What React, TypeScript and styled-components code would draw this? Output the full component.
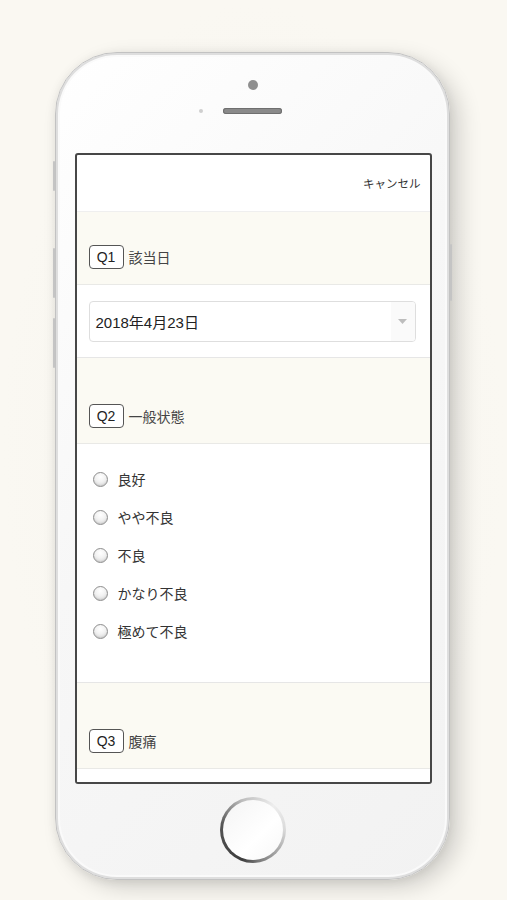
import React from "react";
import styled, { createGlobalStyle } from "styled-components";

const GlobalStyle = createGlobalStyle`
  html, body { margin: 0; padding: 0; }
  body {
    background: #f9f7f1;
    font-family: "Liberation Sans", "Noto Sans CJK JP", sans-serif;
    color: #333;
  }
`;

const Page = styled.div`
  width: 507px;
  height: 900px;
  padding: 52px 0 0 55px;
  box-sizing: border-box;
  overflow: hidden;
  background: radial-gradient(ellipse at 50% 50%, #f6f4ee 0%, #faf8f2 70%);
`;

const Phone = styled.div`
  position: relative;
  width: 395px;
  height: 828px;
  box-sizing: border-box;
  border-radius: 62px;
  background: linear-gradient(135deg, #ffffff 0%, #f7f7f7 45%, #f2f2f2 100%);
  border: 1px solid #c2c2c2;
  box-shadow:
    inset 0 0 0 2px #dedede,
    inset 0 0 0 4px #fafafa,
    10px 8px 22px rgba(0, 0, 0, 0.16),
    0 2px 10px rgba(0, 0, 0, 0.08);
  display: flex;
  flex-direction: column;
  align-items: center;
`;

const SideButton = styled.div<{ $side: "left" | "right"; $top: number; $h: number }>`
  position: absolute;
  ${(p) => (p.$side === "left" ? "left: -3px;" : "right: -3px;")}
  top: ${(p) => p.$top}px;
  width: 2px;
  height: ${(p) => p.$h}px;
  background: #c4c4c4;
  border-radius: 1px;
`;

const TopBezel = styled.div`
  height: 100px;
  width: 100%;
  display: flex;
  flex-direction: column;
  align-items: center;
  padding-top: 27px;
  box-sizing: border-box;
`;

const Camera = styled.div`
  width: 10px;
  height: 10px;
  border-radius: 50%;
  background: #8f8f8f;
`;

const SpeakerRow = styled.div`
  margin-top: 18px;
  width: 100%;
  display: grid;
  grid-template-columns: 1fr auto 1fr;
  align-items: center;
`;

const Sensor = styled.div`
  justify-self: end;
  margin-right: 20px;
  width: 4px;
  height: 4px;
  border-radius: 50%;
  background: #cfcfcf;
`;

const Speaker = styled.div`
  width: 59px;
  height: 6px;
  border-radius: 3px;
  background: #8a8a8a;
  box-shadow: inset 0 0 0 1px #6f6f6f;
`;

const Screen = styled.div`
  width: 357px;
  height: 631px;
  box-sizing: border-box;
  border: 2px solid #474747;
  border-radius: 3px;
  background: #fff;
  overflow: hidden;
  display: flex;
  flex-direction: column;
  margin-left: 1px;
`;

const Header = styled.div`
  height: 56px;
  flex: none;
  display: flex;
  align-items: center;
  justify-content: flex-end;
  padding-right: 9px;
  border-bottom: 1px solid #efefef;
`;

const CancelLink = styled.span`
  font-family: "Noto Sans CJK JP", sans-serif;
  font-size: 11.5px;
  color: #333;
`;

const QuestionHead = styled.div<{ $top: number }>`
  flex: none;
  background: #fbfaf3;
  padding: ${(p) => p.$top}px 12px 15px;
  display: flex;
  align-items: center;
  border-bottom: 1px solid #e9e9e6;
`;

const Badge = styled.span`
  display: inline-flex;
  align-items: center;
  justify-content: center;
  width: 35px;
  height: 24px;
  box-sizing: border-box;
  border: 1px solid #555;
  border-radius: 4px;
  background: #fff;
  font-family: "Liberation Sans", sans-serif;
  font-size: 14px;
  color: #222;
`;

const QuestionTitle = styled.span`
  margin-left: 5px;
  font-family: "Noto Sans CJK JP", sans-serif;
  font-size: 14px;
  color: #444;
`;

const AnswerArea = styled.div<{ $pt: number; $pb: number }>`
  flex: none;
  padding: ${(p) => p.$pt}px 14px ${(p) => p.$pb}px 12px;
  border-bottom: 1px solid #e6e6e6;
`;

const SelectBox = styled.div`
  height: 41px;
  box-sizing: border-box;
  border: 1px solid #dedede;
  border-radius: 4px;
  display: flex;
  align-items: center;
  overflow: hidden;
`;

const SelectValue = styled.span`
  flex: 1;
  padding-left: 6px;
  font-family: "Liberation Sans", "Noto Sans CJK JP", sans-serif;
  font-size: 15px;
  color: #222;
`;

const SelectArrow = styled.div`
  width: 24px;
  align-self: stretch;
  background: #fafafa;
  display: flex;
  align-items: center;
  justify-content: center;
`;

const OptionList = styled.div`
  display: flex;
  flex-direction: column;
`;

const OptionRow = styled.label`
  height: 38px;
  display: flex;
  align-items: center;
  padding-left: 4px;
`;

const Radio = styled.span`
  width: 15px;
  height: 15px;
  box-sizing: border-box;
  border-radius: 50%;
  border: 1px solid #8e8e8e;
  background: radial-gradient(circle at 50% 30%, #ffffff 0%, #f2f2f2 45%, #cfcfcf 100%);
  box-shadow: inset 0 -1px 1px rgba(0, 0, 0, 0.08);
`;

const OptionText = styled.span`
  margin-left: 10px;
  font-family: "Noto Sans CJK JP", sans-serif;
  font-size: 14px;
  color: #333;
`;

const Filler = styled.div`
  flex: 1;
  background: #fff;
`;

const BottomBezel = styled.div`
  flex: 1;
  width: 100%;
  display: flex;
  justify-content: center;
  padding-top: 13px;
  box-sizing: border-box;
`;

const HomeButton = styled.div`
  width: 66px;
  height: 66px;
  border-radius: 50%;
  background: conic-gradient(from 200deg, #3d3d3d 0deg, #555 80deg, #bdbdbd 140deg, #eeeeee 200deg, #d9d9d9 250deg, #7a7a7a 330deg, #3d3d3d 360deg);
  display: flex;
  align-items: center;
  justify-content: center;
`;

const HomeInner = styled.div`
  width: 60px;
  height: 60px;
  border-radius: 50%;
  background: linear-gradient(135deg, #f4f4f4, #ffffff 60%, #f7f7f7);
`;

const options = ["良好", "やや不良", "不良", "かなり不良", "極めて不良"];

export default function App() {
  return (
    <>
      <GlobalStyle />
      <Page>
        <Phone>
          <SideButton $side="left" $top={108} $h={30} />
          <SideButton $side="left" $top={195} $h={50} />
          <SideButton $side="left" $top={265} $h={50} />
          <SideButton $side="right" $top={191} $h={57} />
          <TopBezel>
            <Camera />
            <SpeakerRow>
              <Sensor />
              <Speaker />
              <span />
            </SpeakerRow>
          </TopBezel>
          <Screen>
            <Header>
              <CancelLink>キャンセル</CancelLink>
            </Header>
            <QuestionHead $top={33}>
              <Badge>Q1</Badge>
              <QuestionTitle>該当日</QuestionTitle>
            </QuestionHead>
            <AnswerArea $pt={16} $pb={15}>
              <SelectBox>
                <SelectValue>2018年4月23日</SelectValue>
                <SelectArrow>
                  <svg width="9" height="5" viewBox="0 0 9 5">
                    <path d="M0 0 L9 0 L4.5 5 Z" fill="#bdbdbd" />
                  </svg>
                </SelectArrow>
              </SelectBox>
            </AnswerArea>
            <QuestionHead $top={46}>
              <Badge>Q2</Badge>
              <QuestionTitle>一般状態</QuestionTitle>
            </QuestionHead>
            <AnswerArea $pt={16} $pb={32}>
              <OptionList>
                {options.map((o) => (
                  <OptionRow key={o}>
                    <Radio />
                    <OptionText>{o}</OptionText>
                  </OptionRow>
                ))}
              </OptionList>
            </AnswerArea>
            <QuestionHead $top={46}>
              <Badge>Q3</Badge>
              <QuestionTitle>腹痛</QuestionTitle>
            </QuestionHead>
            <Filler />
          </Screen>
          <BottomBezel>
            <HomeButton>
              <HomeInner />
            </HomeButton>
          </BottomBezel>
        </Phone>
      </Page>
    </>
  );
}
